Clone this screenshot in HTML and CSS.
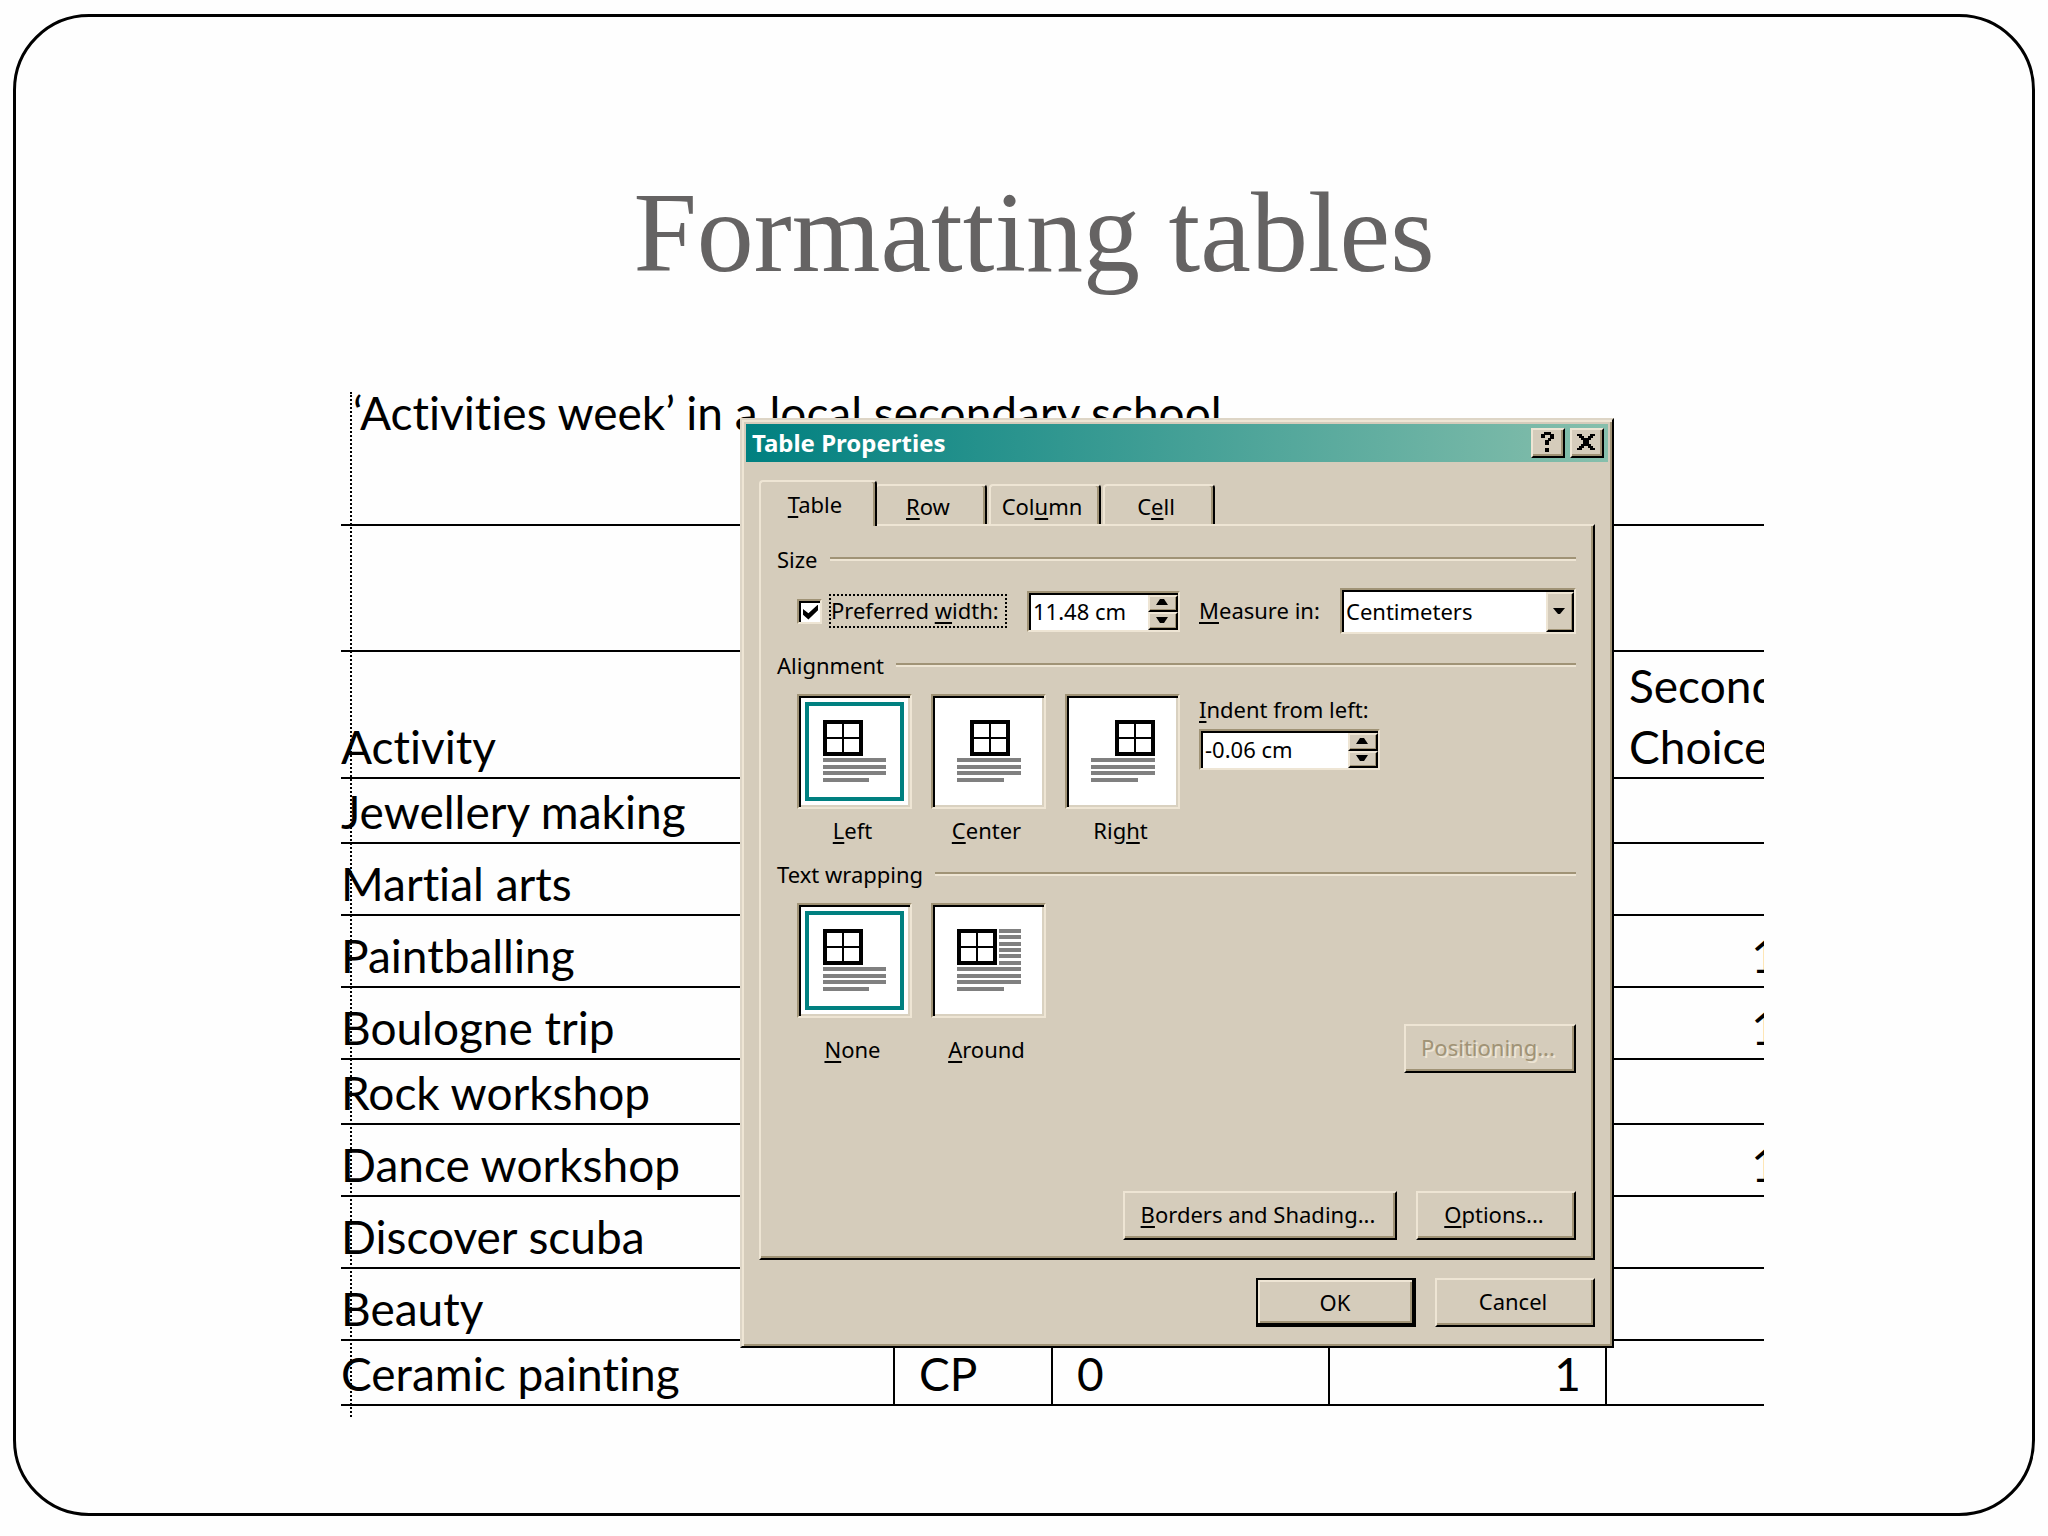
FILE: index.html
```html
<!DOCTYPE html>
<html lang="en">
<head>
<meta charset="utf-8">
<title>Formatting tables</title>
<link rel="stylesheet" href="styles.css">
</head>
<body>
<main class="slide">
  <h1 class="slide-title">Formatting tables</h1>
  <div class="stage">
    <div class="document">
      <table class="activities">
        <colgroup><col class="col-activity"><col class="col-code"><col class="col-choice"><col class="col-choice"><col></colgroup>
        <tbody>
          <tr class="intro"><td colspan="5">‘Activities week’ in a local secondary school</td></tr>
          <tr class="blank"><td colspan="5"></td></tr>
          <tr class="head"><th scope="col">Activity</th><td></td><td></td><td></td><th scope="col" class="second">Second<br>Choice</th></tr>
          <tr class="short"><td>Jewellery making</td><td></td><td></td><td></td><td></td></tr>
          <tr class="tall"><td>Martial arts</td><td></td><td></td><td></td><td></td></tr>
          <tr class="tall"><td>Paintballing</td><td></td><td></td><td></td><td class="num">1</td></tr>
          <tr class="tall"><td>Boulogne trip</td><td></td><td></td><td></td><td class="num">1</td></tr>
          <tr class="short"><td>Rock workshop</td><td></td><td></td><td></td><td></td></tr>
          <tr class="tall"><td>Dance workshop</td><td></td><td></td><td></td><td class="num">1</td></tr>
          <tr class="tall"><td>Discover scuba</td><td></td><td></td><td></td><td></td></tr>
          <tr class="tall"><td>Beauty</td><td></td><td></td><td></td><td></td></tr>
          <tr class="short ruled"><td>Ceramic painting</td><td class="code">CP</td><td class="first">0</td><td class="total">1</td><td></td></tr>
        </tbody>
      </table>
      <div class="guide"></div>

      <section class="dialog" role="dialog" aria-labelledby="dialog-title">
        <header class="titlebar">
          <h2 id="dialog-title">Table Properties</h2>
          <button class="caption-btn" type="button" aria-label="Help">
            <svg width="18" height="22" viewBox="0 0 18 22"><path d="M3 7V3h3V1h7v2h3v5h-3v2h-2v4H7V9h3V7h2V4H7v3zM7 17h4v4H7z"/></svg>
          </button>
          <button class="caption-btn" type="button" aria-label="Close">
            <svg width="18" height="18" viewBox="0 0 18 18"><path d="M0 1h5v2h2v2h4V3h2V1h5v2h-2v2h-2v2h-2v4h2v2h2v2h2v2h-5v-2h-2v-2H7v2H5v2H0v-2h2v-2h2v-2h2V7H4V5H2V3H0z"/></svg>
          </button>
        </header>
        <form class="dialog-body">
          <nav class="tabs" role="tablist">
            <button class="tab active" type="button" role="tab" aria-selected="true"><span><u>T</u>able</span></button>
            <button class="tab" type="button" role="tab"><span><u>R</u>ow</span></button>
            <button class="tab" type="button" role="tab"><span>Col<u>u</u>mn</span></button>
            <button class="tab" type="button" role="tab"><span>C<u>e</u>ll</span></button>
          </nav>
          <div class="panel">
            <h3 class="group">Size</h3>
            <div class="size-row">
              <input class="check" type="checkbox" id="pref" checked>
              <label class="focus" for="pref">Preferred <u>w</u>idth:</label>
              <div class="spin">
                <input type="text" value="11.48 cm" aria-label="Preferred width">
                <div class="spin-btns">
                  <button type="button" aria-label="Increase width"><svg width="12" height="6" viewBox="0 0 12 6"><path d="M0 6h12L8 0H4z"/></svg></button>
                  <button type="button" aria-label="Decrease width"><svg width="12" height="6" viewBox="0 0 12 6"><path d="M0 0h12L8 6H4z"/></svg></button>
                </div>
              </div>
              <label class="measure" for="unit"><u>M</u>easure in:</label>
              <div class="combo">
                <select id="unit"><option>Centimeters</option></select>
                <span class="drop"><svg width="12" height="6" viewBox="0 0 12 6"><path d="M0 0h12L7 6H5z"/></svg></span>
              </div>
            </div>

            <h3 class="group">Alignment</h3>
            <div class="choices align-row">
              <label class="choice"><input type="radio" name="align" checked>
                <svg viewBox="0 0 115 115"><path class="frame" d="M28 28h36v32H28z"/><path class="rule" d="M46 28v32M28 44h36"/><path class="text" d="M26 64h63v4H26zM26 71h63v4H26zM26 77h63v4H26zM26 84h46v4H26z"/></svg>
                <span><u>L</u>eft</span></label>
              <label class="choice"><input type="radio" name="align">
                <svg viewBox="0 0 115 115"><path class="frame" d="M41 28h36v32H41z"/><path class="rule" d="M59 28v32M41 44h36"/><path class="text" d="M26 64h64v4H26zM26 71h64v4H26zM26 77h64v4H26zM26 84h47v4H26z"/></svg>
                <span><u>C</u>enter</span></label>
              <label class="choice"><input type="radio" name="align">
                <svg viewBox="0 0 115 115"><path class="frame" d="M52 28h36v32H52z"/><path class="rule" d="M70 28v32M52 44h36"/><path class="text" d="M26 64h64v4H26zM26 71h64v4H26zM26 77h64v4H26zM26 84h47v4H26z"/></svg>
                <span>Rig<u>h</u>t</span></label>
              <div class="indent">
                <label for="indent"><u>I</u>ndent from left:</label>
                <div class="spin wide">
                  <input type="text" id="indent" value="-0.06 cm">
                  <div class="spin-btns">
                    <button type="button" aria-label="Increase indent"><svg width="12" height="6" viewBox="0 0 12 6"><path d="M0 6h12L8 0H4z"/></svg></button>
                    <button type="button" aria-label="Decrease indent"><svg width="12" height="6" viewBox="0 0 12 6"><path d="M0 0h12L8 6H4z"/></svg></button>
                  </div>
                </div>
              </div>
            </div>

            <h3 class="group">Text wrapping</h3>
            <div class="choices wrap-row">
              <label class="choice"><input type="radio" name="wrap" checked>
                <svg viewBox="0 0 115 115"><path class="frame" d="M28 28h36v32H28z"/><path class="rule" d="M46 28v32M28 44h36"/><path class="text" d="M26 64h63v4H26zM26 71h63v4H26zM26 77h63v4H26zM26 84h46v4H26z"/></svg>
                <span><u>N</u>one</span></label>
              <label class="choice"><input type="radio" name="wrap">
                <svg viewBox="0 0 115 115"><path class="frame" d="M28 28h36v32H28z"/><path class="rule" d="M46 28v32M28 44h36"/><path class="text" d="M68 26h22v4H68zM68 32h22v4H68zM68 39h22v4H68zM68 45h22v4H68zM68 51h22v4H68zM68 58h22v4H68zM26 64h64v4H26zM26 71h64v4H26zM26 77h64v4H26zM26 84h47v4H26z"/></svg>
                <span><u>A</u>round</span></label>
              <button class="btn positioning" type="button" disabled>Positioning...</button>
            </div>

            <div class="panel-actions">
              <button class="btn borders" type="button"><span><u>B</u>orders and Shading...</span></button>
              <button class="btn" type="button"><span><u>O</u>ptions...</span></button>
            </div>
          </div>
          <footer class="dialog-actions">
            <button class="btn default" type="button">OK</button>
            <button class="btn" type="button">Cancel</button>
          </footer>
        </form>
      </section>
    </div>
  </div>
</main>
</body>
</html>
```
FILE: styles.css
```css
:root {
  --face: #d5ccbb;
  --light: #eee5d4;
  --shadow: #a09376;
  --dark: #000;
  --teal: #008080;
}

*, *::before, *::after { box-sizing: border-box; }

body {
  margin: 0;
  padding: 14px 13px 20px;
  background: #fefefe;
  color: #000;
}

.slide {
  min-height: calc(100vh - 34px);
  border: 3px solid #000;
  border-radius: 76px;
}

.slide-title {
  margin: 0;
  padding: 151px 0 94px 20px;
  font: 400 114px/130px "Liberation Serif", serif;
  text-align: center;
  color: #656363;
}

.stage {
  display: grid;
  grid-template-columns: 325fr 1423fr 268fr;
}

.document {
  grid-column: 2;
  position: relative;
  overflow: hidden;
  padding-bottom: 11px;
}

/* Word table behind the dialog */
.activities {
  width: calc(100% + 14px);
  table-layout: fixed;
  border-spacing: 0;
  font: 46px/61px Lato, sans-serif;
  font-variant-ligatures: none;
}
.col-activity { width: 552px; }
.col-code { width: 158px; }
.col-choice { width: 277px; }
.activities td, .activities th {
  padding: 0;
  border-bottom: 2px solid #000;
  font-weight: 400;
  text-align: left;
  vertical-align: bottom;
  white-space: nowrap;
}
.activities .intro td { height: 134px; padding-left: 12px; line-height: 42px; vertical-align: top; }
.blank td { height: 126px; }
.head th { height: 127px; }
.short td { height: 65px; }
.tall td { height: 72px; }
.ruled td + td { border-left: 2px solid #000; }
.activities .second { padding-left: 24px; }
.activities .num { text-align: right; }
.activities .code { padding-left: 24px; }
.activities .first { padding-left: 24px; }
.activities .total { padding-right: 24px; text-align: right; }

.guide {
  position: absolute;
  top: 0;
  bottom: 0;
  left: 9px;
  border-left: 2px dotted #000;
}

/* Dialog window */
.dialog {
  position: absolute;
  top: 26px;
  left: 399px;
  width: 874px;
  height: 930px;
  padding: 4px;
  background: var(--face);
  border: 2px solid var(--dark);
  border-top-color: #ddd5c6;
  border-left-color: #ddd5c6;
  box-shadow: inset 2px 2px var(--light), inset -2px -2px var(--shadow);
  font: 22px/30px "Noto Sans", sans-serif;
}
.dialog button, .dialog input, .dialog select {
  margin: 0;
  font: inherit;
  color: inherit;
}
.dialog u { text-underline-offset: 3px; text-decoration-thickness: 2px; text-decoration-skip-ink: none; }

.titlebar {
  display: flex;
  align-items: center;
  gap: 5px;
  height: 38px;
  padding: 0 4px 0 6px;
  background: linear-gradient(90deg, #008080, #86bfac);
  color: #fff;
}
.titlebar h2 { flex: 1; margin: 0; font-size: 24px; font-weight: 700; }
.caption-btn {
  display: grid;
  place-items: center;
  width: 34px;
  height: 30px;
  padding: 0 2px 2px 0;
  background: var(--face);
  border: 2px solid var(--dark);
  border-top-color: var(--light);
  border-left-color: var(--light);
  box-shadow: inset -2px -2px var(--shadow);
}

.dialog-body { padding: 18px 13px 0; }

.tabs { display: flex; align-items: flex-end; gap: 2px; height: 44px; }
.tab {
  width: 112px;
  height: 40px;
  padding: 2px 6px 0 0;
  background: var(--face);
  border: 2px solid var(--light);
  border-right-color: var(--dark);
  border-bottom: 0;
  border-radius: 4px 4px 0 0;
  box-shadow: inset -2px 0 var(--shadow);
}
.tab.active { z-index: 1; width: 118px; height: 46px; margin: 0 -4px -2px 0; padding: 0 6px 0 0; }

.panel {
  padding: 18px 17px 18px 16px;
  border: 2px solid var(--light);
  border-right-color: var(--dark);
  border-bottom-color: var(--dark);
  box-shadow: inset -2px -2px var(--shadow);
}

.group {
  display: flex;
  align-items: center;
  gap: 12px;
  margin: 0 0 14px;
  font-size: 22px;
  font-weight: 400;
}
.group::after {
  content: "";
  flex: 1;
  height: 4px;
  border-top: 2px solid var(--shadow);
  border-bottom: 2px solid var(--light);
}

.size-row { display: flex; align-items: center; height: 46px; margin: 0 0 16px 20px; }
.dialog .check {
  appearance: none;
  width: 25px;
  height: 25px;
  margin-right: 7px;
  background: #fff;
  border: 2px solid var(--light);
  border-top-color: var(--shadow);
  border-left-color: var(--shadow);
  box-shadow: inset 2px 2px var(--dark);
}
.check:checked::after {
  content: "";
  display: block;
  width: 15px;
  height: 15px;
  margin: 4px;
  background: #000;
  clip-path: polygon(0 30%, 36% 58%, 100% 0, 100% 38%, 36% 100%, 0 68%);
}
.focus { width: 178px; height: 34px; line-height: 28px; border: 2px dotted #000; white-space: nowrap; }

.spin, .combo {
  display: flex;
  background: #fff;
  border: 2px solid var(--light);
  border-top-color: var(--shadow);
  border-left-color: var(--shadow);
  box-shadow: inset 2px 2px var(--dark);
}
.spin { width: 153px; height: 41px; padding: 2px 0 0 2px; margin-left: 20px; }
.spin.wide { width: 181px; margin-left: 0; }
.spin input { flex: 1; min-width: 0; padding: 0 2px 3px; background: none; border: 0; outline: 0; }
.spin-btns { display: flex; flex-direction: column; width: 30px; }
.spin-btns button, .drop {
  display: grid;
  place-items: center;
  flex: 1;
  min-height: 0;
  padding: 0 2px 2px 0;
  background: var(--face);
  border: 2px solid var(--dark);
  border-top-color: var(--light);
  border-left-color: var(--light);
  box-shadow: inset -1px -1px var(--shadow);
}
.measure { margin-left: 19px; padding-bottom: 2px; }
.combo { width: 236px; height: 46px; margin-left: auto; padding: 2px 0 0 2px; }
.combo select { flex: 1; min-width: 0; padding: 0 2px 3px; appearance: none; background: none; border: 0; outline: 0; }
.drop { flex: 0 0 28px; }

.choices { display: flex; align-items: flex-start; gap: 19px; margin-left: 20px; }
.choice { display: grid; row-gap: 6px; width: 115px; }
.choice input {
  grid-area: 1 / 1;
  appearance: none;
  width: 115px;
  height: 115px;
  background: #fff;
  border: 2px solid var(--light);
  border-top-color: var(--shadow);
  border-left-color: var(--shadow);
  box-shadow: inset 2px 2px var(--dark), inset -2px -2px #d9d1c0;
}
.choice input:checked { outline: 4px solid var(--teal); outline-offset: -12px; }
.choice svg { grid-area: 1 / 1; width: 115px; height: 115px; shape-rendering: crispEdges; pointer-events: none; }
.choice .frame { fill: none; stroke: #000; stroke-width: 4px; }
.choice .rule { fill: none; stroke: #000; stroke-width: 2px; }
.choice .text { fill: #808080; }
.choice span { padding-right: 4px; text-align: center; }
.align-row { margin-bottom: 14px; }
.wrap-row { height: 170px; }
.wrap-row .choice { row-gap: 16px; }
.indent { display: grid; row-gap: 5px; }

.btn {
  width: 160px;
  height: 49px;
  padding: 0 4px 4px 0;
  background: var(--face);
  border: 2px solid var(--dark);
  border-top-color: var(--light);
  border-left-color: var(--light);
  box-shadow: inset -2px -2px var(--shadow);
}
.btn.positioning { width: 172px; margin-left: auto; align-self: flex-end; }
.dialog .btn:disabled { color: var(--shadow); text-shadow: 2px 2px var(--light); }
.btn.borders { width: 274px; }
.btn.default {
  border-color: var(--dark);
  border-right-width: 4px;
  border-bottom-width: 4px;
  padding: 0;
  box-shadow: inset 2px 2px var(--light), inset -2px -2px var(--shadow);
}
.panel-actions { display: flex; justify-content: flex-end; gap: 19px; margin-top: 118px; }
.dialog-actions { display: flex; justify-content: flex-end; gap: 19px; margin-top: 18px; }
```
